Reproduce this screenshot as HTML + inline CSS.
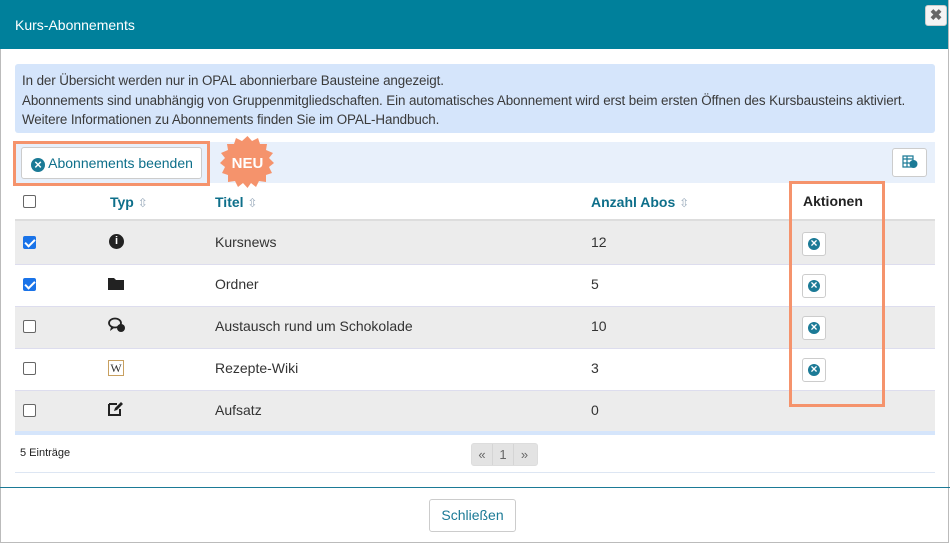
<!DOCTYPE html>
<html><head><meta charset="utf-8"><style>
*{box-sizing:border-box;margin:0;padding:0}
body{width:950px;height:544px;background:#fff;font-family:"Liberation Sans",sans-serif;font-size:14px;color:#333;position:relative;overflow:hidden}
.modal{position:absolute;left:0;top:0;width:949px;height:543px;border:1px solid #bbb;border-top:none}
.hdr{position:absolute;left:0;top:0;width:948px;height:49px;background:#00809b;color:#fff;font-size:14px;padding:17px 0 0 15px}
.x{position:absolute;right:1px;top:5px;width:22px;height:21px;background:#f4f4f4;border:1px solid #ccc;border-radius:3px;color:#666;font-weight:bold;font-size:15px;text-align:center;line-height:19px}
.info{position:absolute;left:15px;top:64px;width:920px;height:69px;background:#d5e5fb;border-radius:3px;padding:7px 0 0 7px;font-size:13.4px;line-height:19.5px;color:#3a3a3a;white-space:nowrap;letter-spacing:-0.1px}
.tb{position:absolute;left:15px;top:142px;width:920px;height:41px;background:#e8f0fb}
.btn{position:absolute;background:#fff;border:1px solid #ccc;border-radius:3px;color:#0e6f8a}
.ob{position:absolute;border:3px solid #f5936c}
.row{position:absolute;left:15px;width:920px;border-bottom:1px solid #dde}
.g{background:#ececec}
.cb{position:absolute;left:8px;width:13px;height:13px;border:1px solid #666;border-radius:2px;background:#fff}
.cb.on{background:#1a73e8;border-color:#1a73e8}
.cb.on:after{content:"";position:absolute;left:3px;top:0px;width:4px;height:8px;border:solid #fff;border-width:0 2px 2px 0;transform:rotate(45deg)}
.t{position:absolute;font-size:14px}
.th{position:absolute;font-weight:bold;color:#0e6f8a;font-size:14px}
.sort{color:#9ab;font-size:12px;font-weight:normal}
.ab{position:absolute;left:787px;width:24px;height:24px;background:#fff;border:1px solid #ccc;border-radius:3px}
.ab:after{content:"×";position:absolute;left:5px;top:5px;width:12px;height:12px;border-radius:50%;background:#1b7a96;color:#fff;font-size:12px;line-height:11px;text-align:center;font-weight:bold}
</style></head><body>
<div class="modal"></div>
<div class="hdr">Kurs-Abonnements<div class="x">✖</div></div>
<div class="info">In der Übersicht werden nur in OPAL abonnierbare Bausteine angezeigt.<br>Abonnements sind unabhängig von Gruppenmitgliedschaften. Ein automatisches Abonnement wird erst beim ersten Öffnen des Kursbausteins aktiviert.<br>Weitere Informationen zu Abonnements finden Sie im OPAL-Handbuch.</div>
<div class="tb"></div>
<div class="btn" style="left:21px;top:147px;width:181px;height:32px;padding:7px 0 0 9px;font-size:14px"><span style="display:inline-block;width:14px;height:14px;border-radius:50%;background:#1b7a96;color:#fff;font-size:13px;line-height:13px;text-align:center;font-weight:bold;vertical-align:-1px">×</span> Abonnements beenden</div>
<div class="ob" style="left:13px;top:141px;width:197px;height:45px"></div>
<svg style="position:absolute;left:220px;top:136px" width="55" height="52" viewBox="0 0 55 52"><polygon fill="#f5936c" points="27.5,0 32,5 38,2 40,8 47,8 46,14 53,17 49,22 54,27 49,31 52,37 46,39 46,46 39,45 36,51 31,47 27.5,52 23,47 18,51 15,45 8,46 8,39 2,37 5,31 0,27 5,22 1,17 8,14 7,8 14,8 16,2 22,5"/><text x="27.5" y="32" text-anchor="middle" fill="#fff" font-family="Liberation Sans" font-weight="bold" font-size="15">NEU</text></svg>
<div class="btn" style="left:892px;top:148px;width:35px;height:29px;text-align:center;padding-top:6px"><svg width="16" height="14" viewBox="0 0 16 14"><path d="M1 1h10v11H1zM1 4h10M1 8h10M5 1v11" fill="none" stroke="#1b7a96" stroke-width="1.2"/><circle cx="11.5" cy="9" r="4" fill="#1b7a96"/></svg></div>
<div class="row" style="top:183px;height:38px;border-bottom:2px solid #ddd">
<div class="cb" style="top:12px"></div>
<div class="th" style="left:95px;top:11px">Typ <span class="sort">⇳</span></div>
<div class="th" style="left:200px;top:11px">Titel <span class="sort">⇳</span></div>
<div class="th" style="left:576px;top:11px">Anzahl Abos <span class="sort">⇳</span></div>
<div class="t" style="left:788px;top:10px;font-weight:bold;color:#222">Aktionen</div></div>
<div class="row g" style="top:221px;height:44px"><div class="cb on" style="top:15px"></div><div style="position:absolute;left:94px;top:13px;width:15px;height:15px;border-radius:50%;background:#222;color:#fff;font-size:11px;font-weight:bold;text-align:center;line-height:15px">i</div><div class="t" style="left:200px;top:13px">Kursnews</div><div class="t" style="left:576px;top:13px">12</div><div class="ab" style="top:11px"></div></div>
<div class="row" style="top:265px;height:42px"><div class="cb on" style="top:13px"></div><svg style="position:absolute;left:93px;top:12px" width="16" height="13"><path d="M0 1h6l2 2h8v10H0z" fill="#222"/></svg><div class="t" style="left:200px;top:11px">Ordner</div><div class="t" style="left:576px;top:11px">5</div><div class="ab" style="top:9px"></div></div>
<div class="row g" style="top:307px;height:42px"><div class="cb" style="top:13px"></div><svg style="position:absolute;left:93px;top:10px" width="18" height="16"><ellipse cx="7" cy="6" rx="6" ry="4.5" fill="none" stroke="#222" stroke-width="1.8"/><path d="M3 10l-1 4 4-3" fill="#222"/><circle cx="13" cy="11" r="4" fill="#222"/></svg><div class="t" style="left:200px;top:11px">Austausch rund um Schokolade</div><div class="t" style="left:576px;top:11px">10</div><div class="ab" style="top:9px"></div></div>
<div class="row" style="top:349px;height:42px"><div class="cb" style="top:13px"></div><div style="position:absolute;left:93px;top:11px;width:16px;height:16px;border:1px solid #c8a060;font-family:'Liberation Serif',serif;font-size:12px;text-align:center;line-height:14px;color:#333">W</div><div class="t" style="left:200px;top:11px">Rezepte-Wiki</div><div class="t" style="left:576px;top:11px">3</div><div class="ab" style="top:9px"></div></div>
<div class="row g" style="top:391px;height:40px;border:none"><div class="cb" style="top:13px"></div><svg style="position:absolute;left:93px;top:10px" width="16" height="16"><path d="M1 3h8M1 3v11h11V8" fill="none" stroke="#222" stroke-width="2"/><path d="M6 10l1-3 6-6 2 2-6 6z" fill="#222"/></svg><div class="t" style="left:200px;top:11px">Aufsatz</div><div class="t" style="left:576px;top:11px">0</div></div>
<div style="position:absolute;left:15px;top:431px;width:920px;height:4px;background:#d5e5fb"></div>
<div class="t" style="left:20px;top:447px;font-size:11px;color:#222">5 Einträge</div>
<div style="position:absolute;left:471px;top:443px;width:67px;height:23px;background:#e3e3e3;border:1px solid #ddd;border-radius:3px;font-size:13px;color:#666;display:flex"><span style="width:21px;text-align:center;line-height:21px;border-right:1px solid #d5d5d5">«</span><span style="width:21px;text-align:center;line-height:21px;border-right:1px solid #d5d5d5">1</span><span style="width:21px;text-align:center;line-height:21px">»</span></div>
<div style="position:absolute;left:15px;top:472px;width:920px;height:1px;background:#dde6f3"></div>
<div style="position:absolute;left:0;top:487px;width:950px;height:1px;background:#1b7a96"></div>
<div class="btn" style="left:429px;top:499px;width:87px;height:33px;text-align:center;line-height:31px;color:#1b7a96">Schließen</div>
<div class="ob" style="left:789px;top:181px;width:96px;height:226px"></div>
</body></html>
